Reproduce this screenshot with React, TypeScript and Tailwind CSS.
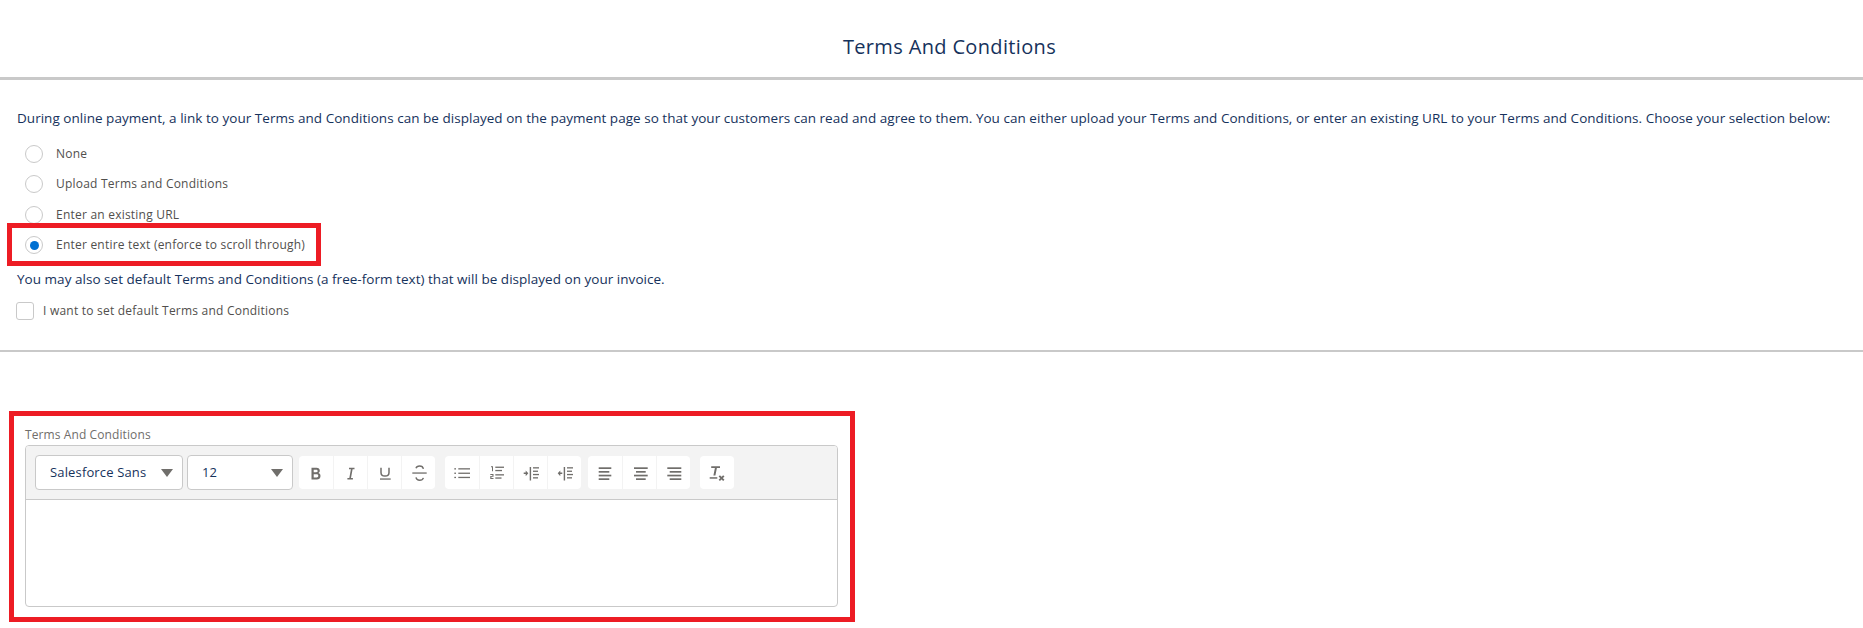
import React from 'react';

const gray = '#706e6b';

// toolbar rows: x, y, width
const Lines = ({ rows, h = 1.3 }: { rows: [number, number, number][]; h?: number }) => (
  <>
    {rows.map(([x, y, w], i) => (
      <rect key={i} x={x} y={y} width={w} height={h} fill={gray} />
    ))}
  </>
);

const indentRows: [number, number, number][] = [[10, 2.2, 6], [10, 5.6, 5], [10, 8.9, 6], [10, 12.2, 5]];

const icons: Record<string, React.ReactNode> = {
  bold: (
    <path
      fillRule="evenodd"
      d="M3.5 2.8h5c2.1 0 3.3 1.100 3.300 2.900 0 1-.5 1.800-1.300 2.300 1.200.4 2 1.400 2 2.900 0 2.200-1.500 3.600-3.700 3.600H3.500V2.800zm2.200 2v2.400h2.600c.8 0 1.300-.4 1.300-1.200s-.5-1.200-1.300-1.200H5.700zm0 4.400v3.300h3c1 0 1.600-.6 1.600-1.650s-.6-1.650-1.600-1.650h-3z"
      fill={gray}
    />
  ),
  italic: <path d="M6 2.800h5.500v1.400H9.600L8 13.100h1.900v1.400H4.400v-1.400h1.900l1.600-8.900H6z" fill={gray} />,
  underline: (
    <>
      <path d="M4 2.800V7.500c0 2.300 1.500 3.600 4 3.600s4-1.300 4-3.600V2.800" fill="none" stroke={gray} strokeWidth="1.500" />
      <rect x="3" y="13.400" width="10.700" height="1.300" fill={gray} />
    </>
  ),
  strike: (
    <>
      <path d="M12.400 3.900C12 2 10.600 1 8.600 1 6.800 1 5.400 1.800 5 3.200" fill="none" stroke={gray} strokeWidth="1.400" />
      <path d="M5 12.400c.3 1.800 1.700 2.900 3.700 2.900 1.900 0 3.200-.9 3.700-2.400" fill="none" stroke={gray} strokeWidth="1.400" />
      <rect x="1.300" y="7.400" width="14.400" height="1.300" fill={gray} />
    </>
  ),
  bullets: <Lines rows={[[0.3, 3.200, 1.700], [0.3, 7.600, 1.700], [0.3, 11.800, 1.700], [4.300, 3.200, 11.700], [4.300, 7.600, 11.700], [4.300, 11.800, 11.700]]} />,
  numbers: (
    <>
      <Lines rows={[[6.300, 1.600, 8.700], [6.300, 4.900, 6.700], [6.300, 9.200, 8.700], [6.300, 12.400, 6.200]]} />
      <path d="M2 1.200h2v5H3V2.200H2zM1.300 9h3.200v2.800H2.400v1.200h2.100v1H1.300v-3.100h2.100v-.9H1.300z" fill={gray} />
    </>
  ),
  indent: (
    <>
      <rect x="6.700" y="2" width="1.400" height="13.500" fill={gray} />
      <Lines rows={indentRows} />
      <path d="M.7 7.500h2V5.400L5.300 8.300l-2.600 2.900V9.100h-2z" fill={gray} />
    </>
  ),
  outdent: (
    <>
      <rect x="6.700" y="2" width="1.400" height="13.500" fill={gray} />
      <Lines rows={indentRows} />
      <path d="M5.300 7.500h-2V5.400L.7 8.300l2.600 2.900V9.100h2z" fill={gray} />
    </>
  ),
  left: <Lines h={1.700} rows={[[1.700, 2.300, 12.600], [1.700, 6, 10.600], [1.700, 9.700, 12.600], [1.700, 13.300, 10.600]]} />,
  center: <Lines h={1.700} rows={[[2, 2.300, 13.700], [4, 6, 9.700], [2, 9.700, 13.700], [4, 13.300, 9.700]]} />,
  right: <Lines h={1.700} rows={[[1.300, 2.300, 14], [3.700, 6, 11.600], [1.300, 9.700, 14], [3.700, 13.300, 11.600]]} />,
  clear: (
    <>
      <path d="M2.200 1.200h8.800v1.800H7.900L6.400 10.500H4.400L5.900 3H2.200z" fill={gray} />
      <rect x="0.7" y="12.200" width="7.600" height="1.500" fill={gray} />
      <path d="M10.300 10.800l4.500 4.500M14.800 10.800l-4.500 4.500" stroke={gray} strokeWidth="1.900" fill="none" />
    </>
  ),
};

const ToolGroup = ({ names }: { names: string[] }) => (
  <div className="flex h-[33px] overflow-hidden rounded-[4px] bg-white">
    {names.map((name, i) => (
      <div
        key={name}
        className={`flex h-full w-[34px] items-center justify-center ${i > 0 ? 'border-l border-[#f3f3f3]' : ''}`}
      >
        <svg width="16" height="16" viewBox="0 0 16 16" className="overflow-visible">{icons[name]}</svg>
      </div>
    ))}
  </div>
);

const FakeSelect = ({ label, width }: { label: string; width: string }) => (
  <div className={`flex h-[35px] items-center justify-between rounded-[4px] border border-[#c9c9c9] bg-white pr-[9px] pl-[14px] ${width}`}>
    <span className="text-[13px] tracking-[0.15px] text-[#16325c]">{label}</span>
    <svg width="12" height="8" viewBox="0 0 12 8">
      <path d="M0 0h12L6 8z" fill={gray} />
    </svg>
  </div>
);

const Radio = ({ checked }: { checked?: boolean }) => (
  <span className="flex h-[18px] w-[18px] shrink-0 items-center justify-center rounded-full border border-[#c9c9c9] bg-white">
    {checked && <span className="h-[9px] w-[9px] rounded-full bg-[#0070d2]" />}
  </span>
);

const RadioRow = ({ label, checked, className }: { label: string; checked?: boolean; className: string }) => (
  <div className={`relative flex items-center pl-[25px] ${className}`}>
    <Radio checked={checked} />
    <span className="ml-[13px] text-[12px] tracking-[0.22px] text-[#514f4d]">{label}</span>
    {checked && <div className="absolute top-[-7px] left-[7px] h-[43px] w-[314px] border-[5px] border-[#ed1c24]" />}
  </div>
);

const App: React.FC = () => {
  return (
    <div className="h-[628px] w-[1863px] overflow-hidden bg-white font-['Open_Sans',sans-serif]">
      <header className="flex h-[80px] items-center justify-center border-b-[3px] border-[#c9c9c9] pt-[16px] pl-[36px]">
        <h1 className="text-[20px] tracking-[0.35px] text-[#16325c]">Terms And Conditions</h1>
      </header>

      <section className="h-[272px] border-b-2 border-[#c9c9c9] pt-[28px]">
        <p className="h-[20px] pl-[17px] text-[13.5px] leading-[20px] tracking-[0.03px] whitespace-nowrap text-[#16325c]">
          During online payment, a link to your Terms and Conditions can be displayed on the payment page so that your customers can read and agree to them. You can either upload your Terms and Conditions, or enter an existing URL to your Terms and Conditions. Choose your selection below:
        </p>
        <div className="mt-[11px]">
          <RadioRow label="None" className="h-[30px]" />
          <RadioRow label="Upload Terms and Conditions" className="h-[30px]" />
          <RadioRow label="Enter an existing URL" className="h-[31px]" />
          <RadioRow label="Enter entire text (enforce to scroll through)" checked className="h-[30px]" />
        </div>
        <p className="mt-[9px] h-[20px] pl-[17px] text-[13.5px] leading-[20px] tracking-[0.03px] text-[#16325c]">
          You may also set default Terms and Conditions (a free-form text) that will be displayed on your invoice.
        </p>
        <div className="mt-[12px] flex h-[20px] items-center pl-[16px]">
          <span className="h-[18px] w-[18px] rounded-[3px] border border-[#c9c9c9] bg-white" />
          <span className="ml-[9px] text-[12px] tracking-[0.22px] text-[#514f4d]">I want to set default Terms and Conditions</span>
        </div>
      </section>

      <div className="mt-[59px] ml-[9px] h-[211px] w-[846px] border-[5px] border-[#ed1c24] pl-[11px]">
        <div className="flex h-[29px] items-center pt-[8px] text-[12px] tracking-[0.1px] text-[#706e6b]">Terms And Conditions</div>
        <div className="h-[162px] w-[813px] overflow-hidden rounded-[4px] border border-[#c9c9c9]">
          <div className="flex h-[54px] items-center border-b border-[#c9c9c9] bg-[#f3f3f3] pl-[9px]">
            <FakeSelect label="Salesforce Sans" width="w-[148px]" />
            <div className="ml-[4px]">
              <FakeSelect label="12" width="w-[106px]" />
            </div>
            <div className="ml-[6px]"><ToolGroup names={['bold', 'italic', 'underline', 'strike']} /></div>
            <div className="ml-[10px]"><ToolGroup names={['bullets', 'numbers', 'indent', 'outdent']} /></div>
            <div className="ml-[7px]"><ToolGroup names={['left', 'center', 'right']} /></div>
            <div className="ml-[10px]"><ToolGroup names={['clear']} /></div>
          </div>
        </div>
      </div>
    </div>
  );
};

export default App;
